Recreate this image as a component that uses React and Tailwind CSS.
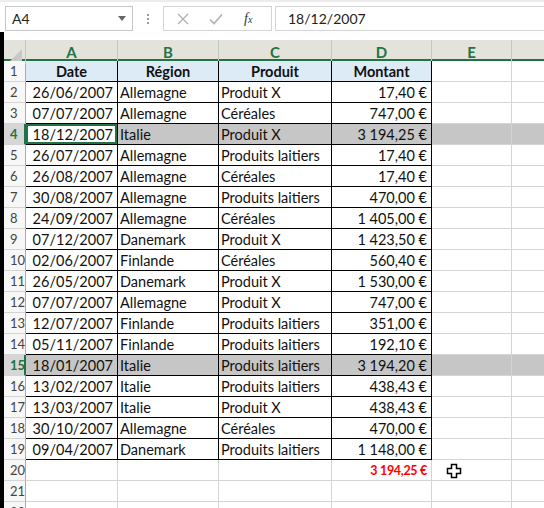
import React from "react";

const rows = [
  ["26/06/2007", "Allemagne", "Produit X", "17,40 €"],
  ["07/07/2007", "Allemagne", "Céréales", "747,00 €"],
  ["18/12/2007", "Italie", "Produit X", "3 194,25 €"],
  ["26/07/2007", "Allemagne", "Produits laitiers", "17,40 €"],
  ["26/08/2007", "Allemagne", "Céréales", "17,40 €"],
  ["30/08/2007", "Allemagne", "Produits laitiers", "470,00 €"],
  ["24/09/2007", "Allemagne", "Céréales", "1 405,00 €"],
  ["07/12/2007", "Danemark", "Produit X", "1 423,50 €"],
  ["02/06/2007", "Finlande", "Céréales", "560,40 €"],
  ["26/05/2007", "Danemark", "Produit X", "1 530,00 €"],
  ["07/07/2007", "Allemagne", "Produit X", "747,00 €"],
  ["12/07/2007", "Finlande", "Produits laitiers", "351,00 €"],
  ["05/11/2007", "Finlande", "Produits laitiers", "192,10 €"],
  ["18/01/2007", "Italie", "Produits laitiers", "3 194,20 €"],
  ["13/02/2007", "Italie", "Produits laitiers", "438,43 €"],
  ["13/03/2007", "Italie", "Produit X", "438,43 €"],
  ["30/10/2007", "Allemagne", "Céréales", "470,00 €"],
  ["09/04/2007", "Danemark", "Produits laitiers", "1 148,00 €"],
];

const cols = "grid grid-cols-[22px_92px_101px_113px_100px_80px_1fr]";

function RowHead({ n, selected }) {
  return (
    <div
      className={`h-[21px] pl-[6px] pt-[2px] flex items-center border-b border-[#d4d4d4] text-[13px] ${
        selected
          ? "bg-[#d6d6d6] text-[#217346] font-bold border-r-2 border-r-[#217346]"
          : "bg-[#f7f7f7] text-[#444] border-r border-r-[#ababab]"
      }`}
    >
      {n}
    </div>
  );
}

function Cell({ children, table, align = "left", bold, bg, active, extra = "" }) {
  return (
    <div
      className={`h-[21px] pt-[2px] flex items-center overflow-hidden whitespace-nowrap border-r border-b ${
        table ? "border-black" : "border-[#d4d4d4]"
      } ${align === "right" ? "justify-end pr-[4px]" : align === "center" ? "justify-center" : "pl-[2px]"} ${
        bold ? "font-bold" : ""
      } ${bg || ""} ${active ? "shadow-[inset_0_0_0_2px_#217346]" : ""} ${extra}`}
    >
      {children}
    </div>
  );
}

export default function App() {
  return (
    <div
      className="w-[544px] h-[508px] overflow-hidden bg-white text-[#111] text-[14.5px]"
      style={{ fontFamily: "Lato, 'Liberation Sans', sans-serif" }}
    >
      {/* Formula bar */}
      <div className="h-[32px] border-t-2 border-[#ececec] flex items-start pt-[4px]">
        <div className="ml-[5px] w-[128px] h-[25px] border border-[#c6c6c6] flex items-center justify-between px-[6px] text-[14px] text-[#222]">
          <span>A4</span>
          <svg width="8" height="5" viewBox="0 0 8 5">
            <path d="M0 0h8L4 5z" fill="#666" />
          </svg>
        </div>
        <div className="w-[30px] h-[25px] flex flex-col items-center justify-center gap-[2px]">
          <span className="w-[2px] h-[2px] bg-[#999]" />
          <span className="w-[2px] h-[2px] bg-[#999]" />
          <span className="w-[2px] h-[2px] bg-[#999]" />
        </div>
        <div className="w-[109px] h-[25px] border border-[#d4d4d4] flex items-center pl-[12px]">
          <svg width="12" height="12" viewBox="0 0 12 12" className="ml-[1px]">
            <path d="M1 1l10 10M11 1L1 11" stroke="#b0b0b0" strokeWidth="1.3" />
          </svg>
          <svg width="14" height="12" viewBox="0 0 14 12" className="ml-[20px]">
            <path d="M1 6.5l4 4L13 1.5" stroke="#b0b0b0" strokeWidth="1.6" fill="none" />
          </svg>
          <span
            className="ml-[21px] italic text-[14px] text-[#333]"
            style={{ fontFamily: "'Liberation Serif', serif" }}
          >
            f<span className="text-[10px]">x</span>
          </span>
        </div>
        <div className="ml-[3px] flex-1 h-[25px] border border-[#d4d4d4] border-r-0 flex items-center pl-[12px] text-[14px] text-[#222]">
          18/12/2007
        </div>
      </div>

      <div className="flex">
        {/* left dark strip */}
        <div className="w-[4px] h-[476px] bg-black" />
        <div className="flex-1 pt-[8px]">
          {/* Column headers */}
          <div className={`${cols} h-[21px] bg-[#e3e3dc] border-b-2 border-[#217346] text-[#217346] font-bold text-[15px]`}>
            <div className="relative border-r border-[#c6c6c6]">
              <svg width="12" height="12" viewBox="0 0 12 12" className="absolute right-[3px] bottom-[3px]">
                <path d="M12 0v12H0z" fill="#c8c8c8" />
              </svg>
            </div>
            {["A", "B", "C", "D", "E"].map((c) => (
              <div key={c} className="flex items-center justify-center pt-[1px] border-r border-[#c6c6c6]">
                {c}
              </div>
            ))}
            <div />
          </div>

          {/* Row 1 header */}
          <div className={cols}>
            <RowHead n={1} />
            {["Date", "Région", "Produit", "Montant"].map((h) => (
              <Cell key={h} table align="center" bold bg="bg-[#ddebf7]">
                {h}
              </Cell>
            ))}
            <Cell />
            <Cell extra="border-r-0" />
          </div>

          {rows.map((r, i) => {
            const n = i + 2;
            const sel = n === 4 || n === 15;
            const gray = sel ? "bg-[#c6c6c6]" : "";
            return (
              <div key={n} className={cols}>
                <RowHead n={n} selected={sel} />
                <Cell table align="right" bg={n === 15 ? gray : ""} active={n === 4}>
                  {r[0]}
                </Cell>
                <Cell table bg={gray}>{r[1]}</Cell>
                <Cell table bg={gray}>{r[2]}</Cell>
                <Cell table align="right" bg={gray}>
                  {r[3]}
                </Cell>
                <Cell bg={gray} />
                <Cell bg={gray} extra="border-r-0" />
              </div>
            );
          })}

          {/* Row 20 total */}
          <div className={cols}>
            <RowHead n={20} />
            <Cell />
            <Cell />
            <Cell />
            <Cell align="right" bold extra="text-[#ff0000] text-[12.5px] tracking-[-0.3px]">
              3 194,25 €
            </Cell>
            <div className="relative h-[21px] border-r border-b border-[#d4d4d4]">
              <svg width="16" height="16" viewBox="0 0 16 16" className="absolute left-[14px] top-[3px]">
                <path
                  d="M5.5 1.5h5v4h4v5h-4v4h-5v-4h-4v-5h4z"
                  fill="#fff"
                  stroke="#000"
                  strokeWidth="1.5"
                />
              </svg>
            </div>
            <Cell extra="border-r-0" />
          </div>

          {[21, 22].map((n) => (
            <div key={n} className={cols}>
              <RowHead n={n} />
              <Cell />
              <Cell />
              <Cell />
              <Cell />
              <Cell />
              <Cell extra="border-r-0" />
            </div>
          ))}
        </div>
      </div>
    </div>
  );
}
